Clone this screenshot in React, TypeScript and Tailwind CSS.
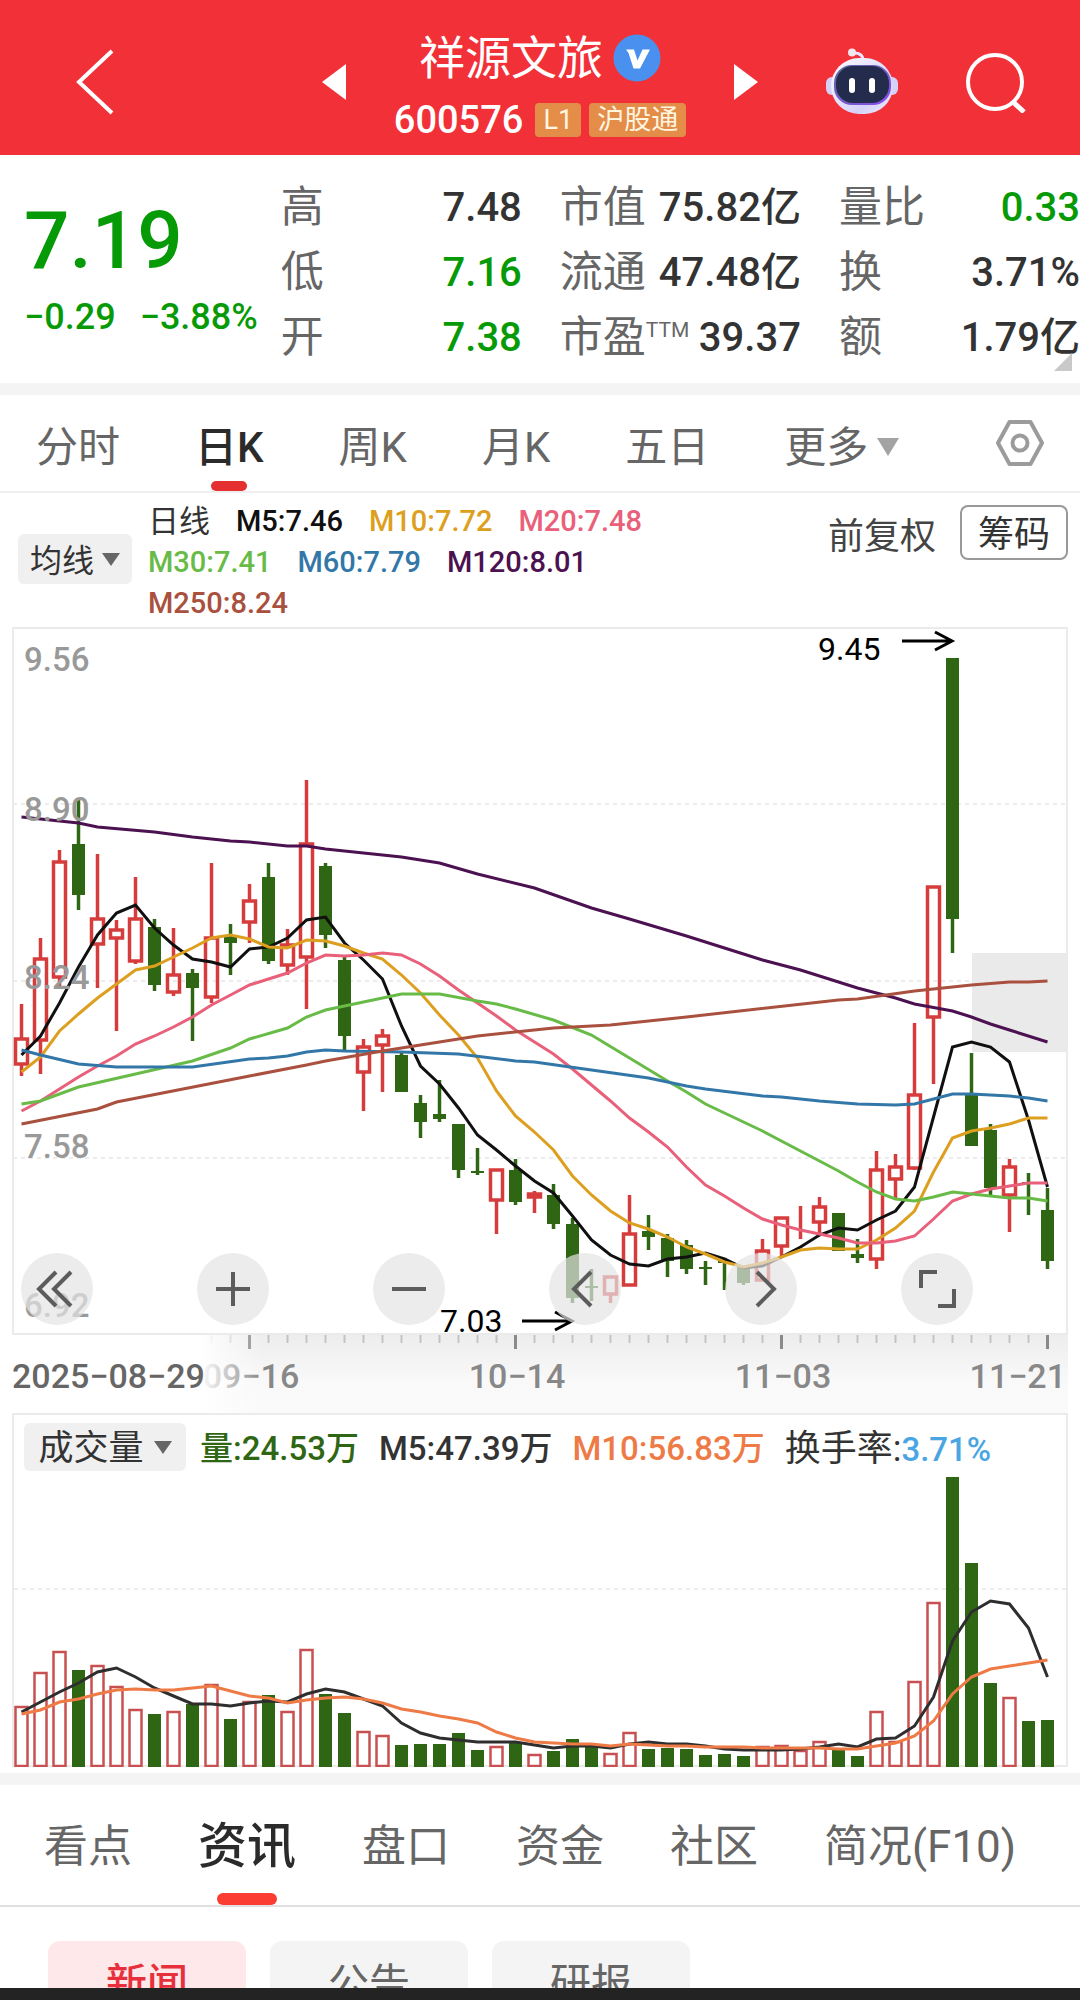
import type { ReactNode } from 'react';

const UP = '#d63c3c';
const DOWN = '#2f6614';

// [direction, high, body top, body bottom, low] in chart units
type Candle = ['r' | 'g', number, number, number, number];

const candles: Candle[] = [
  ['r', 1004, 1039, 1064, 1076],
  ['r', 938, 959, 1040, 1074],
  ['r', 850, 862, 977, 986],
  ['g', 799, 844, 895, 910],
  ['r', 854, 919, 944, 988],
  ['r', 920, 930, 938, 1031],
  ['r', 877, 919, 961, 964],
  ['g', 919, 927, 985, 991],
  ['r', 928, 975, 992, 996],
  ['g', 969, 973, 988, 1041],
  ['r', 863, 938, 997, 1003],
  ['g', 924, 937, 943, 975],
  ['r', 884, 901, 922, 943],
  ['g', 863, 877, 961, 964],
  ['r', 929, 945, 965, 975],
  ['r', 780, 844, 957, 1009],
  ['g', 863, 866, 935, 948],
  ['g', 957, 960, 1036, 1050],
  ['r', 1039, 1047, 1072, 1111],
  ['r', 1029, 1036, 1045, 1092],
  ['g', 1052, 1055, 1092, 1092],
  ['g', 1095, 1103, 1122, 1138],
  ['g', 1080, 1114, 1119, 1122],
  ['g', 1124, 1124, 1170, 1178],
  ['g', 1148, 1171, 1173, 1175],
  ['r', 1170, 1170, 1200, 1234],
  ['g', 1159, 1170, 1202, 1205],
  ['r', 1191, 1194, 1197, 1213],
  ['g', 1184, 1195, 1224, 1229],
  ['g', 1218, 1224, 1298, 1303],
  ['g', 1269, 1286, 1288, 1301],
  ['r', 1277, 1277, 1294, 1303],
  ['r', 1195, 1234, 1285, 1285],
  ['g', 1215, 1231, 1237, 1250],
  ['g', 1234, 1238, 1261, 1277],
  ['g', 1240, 1245, 1269, 1274],
  ['g', 1261, 1267, 1269, 1285],
  ['g', 1260, 1261, 1263, 1290],
  ['g', 1267, 1267, 1283, 1285],
  ['r', 1239, 1251, 1280, 1280],
  ['r', 1218, 1218, 1246, 1257],
  ['r', 1206, 1218, 1218, 1239],
  ['r', 1197, 1207, 1222, 1235],
  ['g', 1213, 1213, 1251, 1251],
  ['g', 1239, 1254, 1258, 1263],
  ['r', 1151, 1170, 1259, 1269],
  ['r', 1154, 1167, 1179, 1198],
  ['r', 1023, 1095, 1168, 1170],
  ['r', 887, 887, 1017, 1084],
  ['g', 658, 658, 919, 953],
  ['g', 1053, 1095, 1146, 1146],
  ['g', 1124, 1130, 1188, 1195],
  ['r', 1159, 1167, 1195, 1232],
  ['g', 1173, 1182, 1184, 1215],
  ['g', 1188, 1210, 1261, 1269],
];

const volumes = [
  1706, 1672, 1651, 1670, 1665, 1686, 1709, 1714, 1711, 1704, 1684, 1719, 1701, 1695, 1711, 1649, 1694, 1713, 1731,
  1735, 1745, 1744, 1744, 1733, 1750, 1746, 1743, 1754, 1751, 1739, 1747, 1753, 1732, 1749, 1748, 1749, 1755, 1754,
  1756, 1746, 1745, 1750, 1741, 1749, 1756, 1711, 1741, 1681, 1602, 1477, 1563, 1683, 1697, 1721, 1720,
];

// [day index, y]
type Line = { color: string; points: [number, number][] };

const seq = (ys: number[]): [number, number][] => ys.map((y, i) => [i, y]);

const averages: Line[] = [
  {
    color: '#4b1150',
    points: [
      [0, 817], [3, 823], [4, 827], [7, 832], [9, 837], [11, 841], [12, 842], [14, 846], [15, 846], [16, 849],
      [18, 853], [20, 857], [22, 863], [24, 874], [27, 888], [30, 908], [32, 919], [35, 936], [37, 948], [39, 960],
      [41, 970], [44, 988], [46, 998], [47, 1004], [49, 1011], [50, 1017], [51, 1024], [52, 1030], [54, 1042],
    ],
  },
  {
    color: '#101010',
    points: seq([
      1055, 1036, 1003, 967, 935, 913, 905, 928, 945, 959, 962, 967, 949, 947, 938, 920, 917, 943, 960, 979, 1026,
      1066, 1084, 1108, 1135, 1150, 1166, 1181, 1193, 1216, 1240, 1255, 1264, 1266, 1259, 1257, 1253, 1259, 1268,
      1266, 1257, 1247, 1235, 1228, 1230, 1220, 1211, 1187, 1117, 1047, 1042, 1047, 1062, 1120, 1187,
    ]),
  },
  {
    color: '#dd9f20',
    points: seq([
      1072, 1057, 1031, 1014, 998, 984, 970, 966, 957, 948, 938, 935, 939, 947, 948, 940, 941, 946, 953, 959, 975,
      993, 1015, 1035, 1058, 1091, 1116, 1132, 1150, 1176, 1195, 1211, 1223, 1229, 1237, 1247, 1254, 1262, 1267,
      1263, 1257, 1250, 1248, 1249, 1249, 1240, 1228, 1211, 1172, 1138, 1131, 1128, 1124, 1118, 1118,
    ]),
  },
  {
    color: '#e8607a',
    points: seq([
      1111, 1101, 1089, 1077, 1066, 1056, 1044, 1036, 1027, 1017, 1005, 995, 985, 979, 973, 963, 955, 956, 955, 953,
      955, 964, 976, 990, 1003, 1016, 1030, 1042, 1054, 1069, 1085, 1101, 1118, 1132, 1147, 1167, 1185, 1196, 1208,
      1219, 1225, 1230, 1234, 1238, 1243, 1243, 1241, 1236, 1219, 1201, 1194, 1189, 1186, 1183, 1183,
    ]),
  },
  {
    color: '#69bb48',
    points: [
      [0, 1104], [1, 1101], [3, 1087], [6, 1074], [9, 1061], [11, 1048], [12, 1039], [14, 1028], [15, 1017],
      [16, 1010], [17, 1006], [18, 1002], [19, 998], [20, 994], [22, 994], [24, 1001], [25, 1004], [26, 1009],
      [28, 1020], [30, 1035], [32, 1058], [34, 1081], [35, 1092], [36, 1104], [39, 1131], [42, 1161], [43, 1171],
      [44, 1182], [45, 1192], [46, 1199], [47, 1201], [48, 1197], [49, 1192], [51, 1196], [52, 1198], [53, 1198],
      [54, 1201],
    ],
  },
  {
    color: '#3377a8',
    points: [
      [0, 1050], [1, 1055], [3, 1064], [5, 1067], [9, 1067], [12, 1059], [13, 1058], [14, 1056], [15, 1052],
      [16, 1050], [17, 1051], [20, 1052], [23, 1054], [26, 1061], [27, 1062], [30, 1070], [33, 1078], [35, 1086],
      [36, 1089], [39, 1096], [40, 1097], [41, 1099], [42, 1101], [44, 1104], [46, 1105], [47, 1104], [48, 1099],
      [49, 1094], [50, 1094], [52, 1096], [53, 1098], [54, 1101],
    ],
  },
  {
    color: '#a9503e',
    points: [
      [0, 1124], [4, 1109], [5, 1102], [12, 1076], [15, 1065], [16, 1061], [19, 1051], [22, 1042], [24, 1036],
      [28, 1028], [31, 1025], [35, 1017], [43, 1000], [44, 999], [47, 991], [50, 985], [52, 982], [53, 982],
      [54, 981],
    ],
  },
];

const volumeAverages: Line[] = [
  {
    color: '#2e2e2e',
    points: seq([
      1712, 1702, 1692, 1683, 1672, 1668, 1677, 1688, 1696, 1704, 1704, 1706, 1703, 1701, 1702, 1694, 1689, 1692,
      1699, 1706, 1723, 1733, 1738, 1740, 1742, 1742, 1742, 1745, 1748, 1746, 1746, 1748, 1744, 1742, 1744, 1744,
      1746, 1749, 1750, 1750, 1750, 1749, 1747, 1744, 1747, 1739, 1738, 1726, 1697, 1641, 1612, 1601, 1604, 1628,
      1677,
    ]),
  },
  {
    color: '#ee7a46',
    points: seq([
      1714, 1710, 1702, 1699, 1694, 1690, 1689, 1690, 1690, 1688, 1686, 1691, 1696, 1698, 1703, 1700, 1698, 1697,
      1699, 1703, 1709, 1712, 1716, 1719, 1723, 1732, 1738, 1742, 1743, 1744, 1744, 1746, 1744, 1745, 1746, 1746,
      1747, 1747, 1747, 1748, 1748, 1748, 1748, 1749, 1749, 1746, 1743, 1736, 1721, 1694, 1677, 1669, 1666, 1663,
      1660,
    ]),
  },
];

const cx = (i: number) => 21.5 + i * 19;
const toPoints = (line: Line) => line.points.map(([i, y]) => `${cx(i)},${y}`).join(' ');

const quotes = [
  [
    { label: '高', value: '7.48' },
    { label: '市值', value: '75.82亿' },
    { label: '量比', value: '0.33', green: true },
  ],
  [
    { label: '低', value: '7.16', green: true },
    { label: '流通', value: '47.48亿' },
    { label: '换', value: '3.71%' },
  ],
  [
    { label: '开', value: '7.38', green: true },
    { label: '市盈', sup: 'TTM', value: '39.37' },
    { label: '额', value: '1.79亿' },
  ],
];

const periods = ['分时', '日K', '周K', '月K', '五日'];
const sections = ['看点', '资讯', '盘口', '资金', '社区', '简况(F10)'];

export default function App() {
  return (
    <div className="flex h-screen flex-col overflow-hidden bg-white font-['Roboto','Noto_Sans_CJK_SC',sans-serif] text-[#333]">
      <Header />
      <main className="min-h-0 flex-1 overflow-hidden">
        <Quote />
        <PeriodTabs />
        <Averages />
        <KChart />
        <VolumeChart />
        <SectionTabs />
        <div className="flex gap-6 px-12 pt-[34px]">
          <Chip active>新闻</Chip>
          <Chip>公告</Chip>
          <Chip>研报</Chip>
        </div>
      </main>
      <div className="h-3 shrink-0 bg-[#232323]" />
    </div>
  );
}

function Header() {
  return (
    <header className="flex h-[155px] shrink-0 items-center bg-[#f23038] pt-2 text-white">
      <div className="flex w-[32%] items-center justify-between pl-[75px]">
        <button aria-label="返回">
          <svg width="40" height="68" viewBox="0 0 40 68" fill="none" stroke="white" strokeWidth="4">
            <path d="M37 3 4 34l33 31" />
          </svg>
        </button>
        <button aria-label="上一只">
          <svg width="24" height="36" viewBox="0 0 24 36" fill="white">
            <path d="M24 0v36L0 18z" />
          </svg>
        </button>
      </div>
      <div className="flex w-[36%] flex-col items-center pt-3">
        <div className="flex items-center gap-[10px]">
          <h1 className="text-[46px] leading-[64px]">祥源文旅</h1>
          <svg width="48" height="48" viewBox="0 0 48 48">
            <circle cx="24" cy="24" r="23.5" fill="#4a90ee" />
            <path d="M13 15.500h8l3.500 11 5-11H37L27 34.500h-6.500L15.500 19z" fill="white" />
          </svg>
        </div>
        <div className="flex items-center gap-2 leading-[60px]">
          <span className="mr-1 text-[38px] font-medium">600576</span>
          <span className="rounded-sm bg-[#e48d49] px-2 text-[27px] leading-[34px] text-[#fff6e0]">L1</span>
          <span className="rounded-sm bg-[#e48d49] px-2 text-[27px] leading-[34px] text-[#fff6e0]">沪股通</span>
        </div>
      </div>
      <div className="flex w-[32%] items-center justify-between pr-[54px]">
        <button aria-label="下一只">
          <svg width="24" height="36" viewBox="0 0 24 36" fill="white">
            <path d="M0 0v36l24-18z" />
          </svg>
        </button>
        <div className="flex items-center gap-[68px]">
          <button aria-label="智能助手">
            <Robot />
          </button>
          <button aria-label="搜索">
            <svg width="60" height="62" viewBox="0 0 60 62" fill="none" stroke="white" strokeWidth="4">
              <circle cx="29" cy="31" r="27" />
              <path d="m47 51 11 10" strokeWidth="5" />
            </svg>
          </button>
        </div>
      </div>
    </header>
  );
}

function Robot() {
  return (
    <svg width="72" height="68" viewBox="0 0 72 68">
      <defs>
        <linearGradient id="shell" x1="0" y1="0" x2="1" y2="1">
          <stop offset="0" stopColor="#fdfcff" />
          <stop offset="0.700" stopColor="#d6d2f8" />
          <stop offset="1" stopColor="#f0eeff" />
        </linearGradient>
        <linearGradient id="rim" x1="0" y1="0" x2="1" y2="1">
          <stop offset="0" stopColor="#5a6a9a" />
          <stop offset="1" stopColor="#8a4cf0" />
        </linearGradient>
      </defs>
      <path d="M37 12c0-5-3-7-9-7" fill="none" stroke="#e9e5fb" strokeWidth="3" />
      <circle cx="26" cy="4.500" r="4" fill="#f4e6ee" />
      <rect x="0" y="29" width="72" height="18" rx="6" fill="#d4d0f6" />
      <rect x="5" y="10" width="62" height="56" rx="28" fill="url(#shell)" />
      <rect x="8" y="17" width="57" height="40" rx="18" fill="url(#rim)" />
      <rect x="10" y="18" width="53" height="37" rx="17" fill="#232c4c" />
      <rect x="23" y="30" width="6" height="15" rx="3" fill="white" />
      <rect x="43" y="30" width="6" height="15" rx="3" fill="white" />
    </svg>
  );
}

function Quote() {
  return (
    <section className="relative flex border-b-12 border-[#f4f4f4] pt-5 pb-[13px]">
      <div className="w-[26%] pl-6 whitespace-nowrap text-[#079a07]">
        <div className="pt-5 text-[80px] leading-[92px] font-medium">7.19</div>
        <div className="flex gap-6 text-[36px] leading-[60px] font-medium">
          <span>−0.29</span>
          <span>−3.88%</span>
        </div>
      </div>
      <div className="grid flex-1 grid-cols-3 gap-x-[38px]">
        {quotes.flat().map((q) => (
          <div key={q.label} className="flex justify-between leading-[65px] whitespace-nowrap">
            <span className="flex text-[43px] text-[#666]">
              {q.label}
              {q.sup && <span className="text-[21px] leading-[50px]">{q.sup}</span>}
            </span>
            <span className={`text-[40px] font-medium ${q.green ? 'text-[#079a07]' : ''}`}>{q.value}</span>
          </div>
        ))}
      </div>
      <svg className="absolute right-2 bottom-3" width="18" height="18" viewBox="0 0 18 18">
        <path d="M18 0v18H0z" fill="#c9c9c9" />
      </svg>
    </section>
  );
}

function PeriodTabs() {
  return (
    <nav className="flex h-[98px] items-stretch gap-[75px] border-b-2 border-[#efefef] px-9 text-[42px] text-[#666]">
      {periods.map((p) => (
        <button key={p} className={`relative pt-2 ${p === '日K' ? 'font-medium text-[#2b2b2b]' : ''}`}>
          {p}
          {p === '日K' && (
            <span className="absolute bottom-0 left-1/2 h-[10px] w-9 -translate-x-1/2 rounded-full bg-[#e43030]" />
          )}
        </button>
      ))}
      <button className="flex items-center gap-2 pt-2">
        更多
        <svg width="24" height="20" viewBox="0 0 24 20" fill="#a3a3a3">
          <path d="M1 1h22L12 19z" />
        </svg>
      </button>
      <button aria-label="设置" className="ml-auto">
        <svg width="48" height="46" viewBox="0 0 48 46" fill="none" stroke="#9b9b9b" strokeWidth="4">
          <path d="M13.500 2h21L46 23 34.500 44h-21L2 23z" strokeLinejoin="round" />
          <circle cx="24" cy="23" r="7.500" />
        </svg>
      </button>
    </nav>
  );
}

function Caret() {
  return (
    <svg width="18" height="13" viewBox="0 0 18 13" fill="#666">
      <path d="M0 0h18L9 13z" />
    </svg>
  );
}

function Averages() {
  return (
    <section className="flex pt-2 pr-3 pb-[3px] pl-[18px]">
      <button className="mt-[33px] flex h-[50px] w-[114px] shrink-0 items-center justify-center gap-2 rounded-md bg-[#f0f0f0] text-[32px]">
        <span className="pt-1">均线</span>
        <Caret />
      </button>
      <div className="ml-4 flex w-[530px] flex-wrap content-start gap-x-[26px] text-[29px] leading-[41px] font-medium">
        <span className="text-[31px] font-normal">日线</span>
        <span className="text-[#101010]">M5:7.46</span>
        <span className="text-[#dd9f20]">M10:7.72</span>
        <span className="text-[#e8607a]">M20:7.48</span>
        <span className="text-[#69bb48]">M30:7.41</span>
        <span className="text-[#3377a8]">M60:7.79</span>
        <span className="text-[#4b1150]">M120:8.01</span>
        <span className="text-[#a9503e]">M250:8.24</span>
      </div>
      <div className="mt-1 ml-auto flex h-[55px] items-center gap-6">
        <span className="pt-2 text-[36px] text-[#444]">前复权</span>
        <button className="h-full rounded-lg border-2 border-[#999] px-4 pt-1 text-[36px] leading-none">筹码</button>
      </div>
    </section>
  );
}

function KChart() {
  return (
    <section className="relative mx-3">
      <svg className="block w-full" viewBox="12 627 1056 786">
        <defs>
          <linearGradient id="axis" x1="0" y1="0" x2="0" y2="1">
            <stop offset="0" stopColor="#ededed" />
            <stop offset="0.600" stopColor="#f9f9f9" />
            <stop offset="1" stopColor="#fafafa" />
          </linearGradient>
          <linearGradient id="fade" x1="0" y1="0" x2="1" y2="0">
            <stop offset="0.750" stopColor="white" />
            <stop offset="1" stopColor="white" stopOpacity="0" />
          </linearGradient>
        </defs>

        <rect x="972" y="953" width="95" height="99" fill="#eaeaea" />
        {[804, 981, 1158].map((y) => (
          <line key={y} x1="13" x2="1067" y1={y} y2={y} stroke="#ececec" strokeWidth="2" strokeDasharray="4 4" />
        ))}
        <rect x="13" y="628" width="1054" height="706" fill="none" stroke="#ebebeb" strokeWidth="2" />

        {candles.map(([dir, high, top, bottom, low], i) => {
          const color = dir === 'r' ? UP : DOWN;
          return (
            <g key={i} stroke={color} strokeWidth="3.500">
              <line x1={cx(i)} x2={cx(i)} y1={high} y2={top} />
              <line x1={cx(i)} x2={cx(i)} y1={bottom} y2={low} />
              {dir === 'r' ? (
                <rect x={cx(i) - 6} y={top} width="12" height={bottom - top} fill="none" />
              ) : (
                <rect x={cx(i) - 6.5} y={top} width="13" height={bottom - top} fill={color} stroke="none" />
              )}
            </g>
          );
        })}
        {averages.map((line) => (
          <polyline key={line.color} points={toPoints(line)} fill="none" stroke={line.color} strokeWidth="3" />
        ))}

        <g className="text-[33px] font-medium" fill="#999">
          <text x="24" y="671">9.56</text>
          <text x="24" y="821">8.90</text>
          <text x="24" y="989">8.24</text>
          <text x="24" y="1158">7.58</text>
          <text x="24" y="1317">6.92</text>
        </g>
        <g className="text-[32px]" fill="black">
          <text x="818" y="660">9.45</text>
          <text x="440" y="1332">7.03</text>
        </g>
        <g fill="none" stroke="black" strokeWidth="3">
          <path d="M902 641h49M935 632l17 9-17 9" />
          <path d="M522 1321h49M555 1312l17 9-17 9" />
        </g>

        {/* date axis */}
        <rect x="12" y="1335" width="1056" height="78" fill="url(#axis)" />
        {candles.map((_, i) => {
          const major = [12, 26, 40, 54].includes(i);
          return (
            <line
              key={i}
              x1={cx(i)}
              x2={cx(i)}
              y1="1335"
              y2={major ? 1349 : 1343}
              stroke={major ? '#8a8a8a' : '#c4c4c4'}
              strokeWidth={major ? 3 : 2}
            />
          );
        })}
        <g className="text-[34px] font-medium" fill="#888">
          <text x="251" y="1388" textAnchor="middle">09−16</text>
          <text x="517" y="1388" textAnchor="middle">10−14</text>
          <text x="783" y="1388" textAnchor="middle">11−03</text>
          <text x="1066" y="1388" textAnchor="end">11−21</text>
        </g>
        <rect x="12" y="1335" width="250" height="78" fill="url(#fade)" />
        <text x="12" y="1388" className="text-[34px] font-medium" fill="#666">2025−08−29</text>
      </svg>

      <div className="absolute bottom-[88px] left-[9px] flex gap-[104px]">
        <ChartButton label="最早">
          <path d="M35 19 18 36l17 17M50 19 33 36l17 17" />
        </ChartButton>
        <ChartButton label="放大">
          <path d="M19 36h34M36 19v34" />
        </ChartButton>
        <ChartButton label="缩小">
          <path d="M19 36h34" />
        </ChartButton>
        <ChartButton label="左移">
          <path d="M42 19 25 36l17 17" />
        </ChartButton>
        <ChartButton label="右移">
          <path d="m32 19 17 17-17 17" />
        </ChartButton>
        <ChartButton label="全屏">
          <path d="M20 35V19h16M53 36v17H37" />
        </ChartButton>
      </div>
    </section>
  );
}

function ChartButton({ label, children }: { label: string; children: ReactNode }) {
  return (
    <button aria-label={label} className="size-[72px] rounded-full bg-[#e4e4e4]/70">
      <svg viewBox="0 0 72 72" fill="none" stroke="#5c5c5c" strokeWidth="4">
        {children}
      </svg>
    </button>
  );
}

function VolumeChart() {
  return (
    <section className="border-b-12 border-[#f4f4f4] px-3 pb-[6px]">
      <div className="border-2 border-b-0 border-[#ebebeb]">
        <div className="flex h-[60px] items-center gap-5 pt-1 pl-[10px] text-[33px] font-medium whitespace-nowrap">
          <button className="-mr-[6px] flex h-12 w-[162px] items-center justify-center gap-[10px] rounded-md bg-[#f0f0f0] text-[35px] font-normal">
            <span className="pt-1">成交量</span>
            <Caret />
          </button>
          <span className="pt-1 text-[#2f6614]">量:24.53万</span>
          <span className="pt-1">M5:47.39万</span>
          <span className="pt-1 text-[#ee7a46]">M10:56.83万</span>
          <span className="pt-1">
            <span className="text-[36px] font-normal">换手率:</span>
            <span className="text-[#4aa6e2]">3.71%</span>
          </span>
        </div>
        <svg className="block w-full" viewBox="14 1475 1052 292">
          <line x1="14" x2="1066" y1="1589" y2="1589" stroke="#ececec" strokeWidth="2" strokeDasharray="4 4" />
          <line x1="14" x2="1066" y1="1766" y2="1766" stroke="#ebebeb" strokeWidth="2" />
          {volumes.map((top, i) =>
            candles[i][0] === 'r' ? (
              <rect
                key={i}
                x={cx(i) - 6}
                y={top + 1}
                width="12"
                height={1765 - top}
                fill="none"
                stroke="#c95050"
                strokeWidth="2.500"
              />
            ) : (
              <rect key={i} x={cx(i) - 6.5} y={top} width="13" height={1767 - top} fill={DOWN} />
            ),
          )}
          {volumeAverages.map((line) => (
            <polyline key={line.color} points={toPoints(line)} fill="none" stroke={line.color} strokeWidth="3" />
          ))}
        </svg>
      </div>
    </section>
  );
}

function SectionTabs() {
  return (
    <nav className="flex h-[122px] gap-[66px] border-b-2 border-[#e0e0e0] pl-11 text-[44px] whitespace-nowrap text-[#666]">
      {sections.map((s) => (
        <button key={s} className={`relative pt-1 ${s === '资讯' ? 'text-[49px] font-medium text-[#2b2b2b]' : ''}`}>
          {s}
          {s === '资讯' && (
            <span className="absolute bottom-0 left-1/2 h-3 w-[60px] -translate-x-1/2 rounded-full bg-[#fa3c32]" />
          )}
        </button>
      ))}
    </nav>
  );
}

function Chip({ active, children }: { active?: boolean; children: ReactNode }) {
  return (
    <button
      className={`h-[84px] w-[198px] rounded-xl pt-1 text-[41px] ${
        active ? 'bg-[#ffe8e9] font-medium text-[#e8303c]' : 'bg-[#f4f4f4] text-[#666]'
      }`}
    >
      {children}
    </button>
  );
}
